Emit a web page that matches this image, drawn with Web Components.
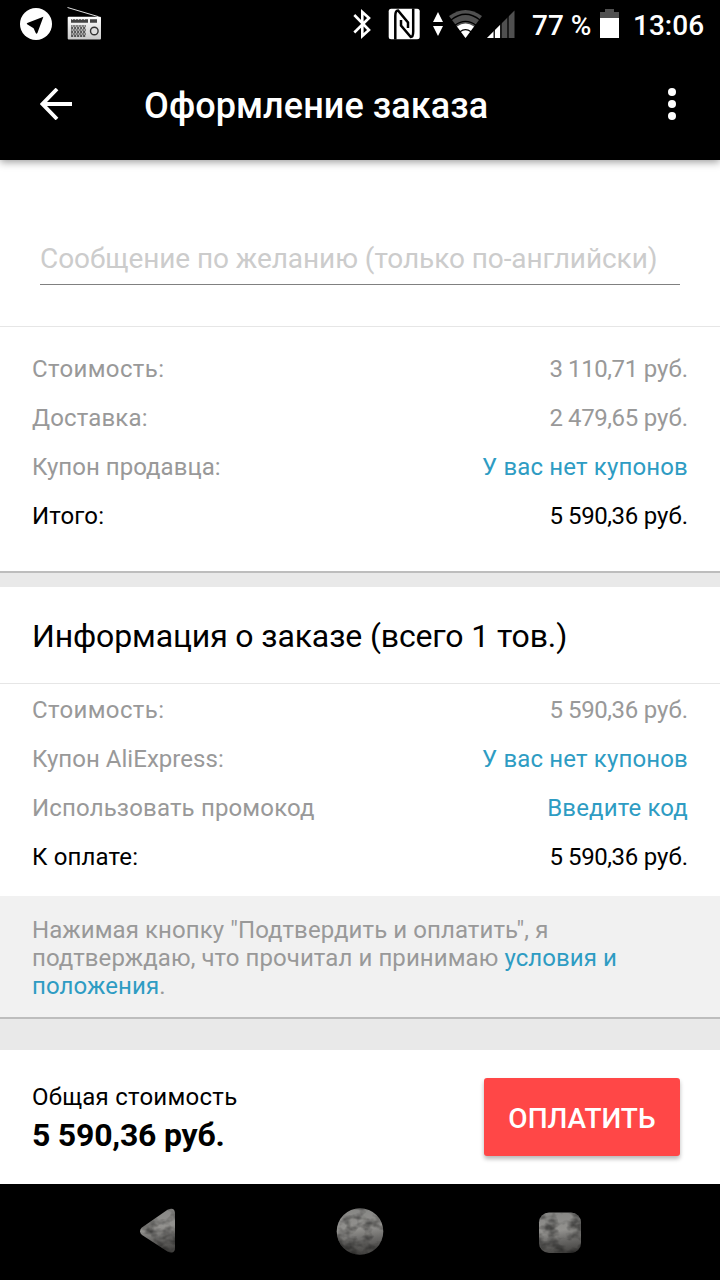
<!DOCTYPE html>
<html lang="ru">
<head>
<meta charset="utf-8">
<title>Оформление заказа</title>
<style>
    body {
        margin: 0;
        font-family: Roboto, "Noto Sans", sans-serif;
        background: #e9e9e9;
        color: #000;
    }
</style>
</head>
<body>
<checkout-screen></checkout-screen>

<script>
class StatusBar extends HTMLElement {
    constructor() {
        super();
        this.attachShadow({ mode: "open" });
    }

    connectedCallback() {
        this.shadowRoot.innerHTML = `
        <style>
            :host {
                display: flex;
                align-items: flex-start;
                justify-content: space-between;
                height: 48px;
                padding: 0 16px 0 20px;
                box-sizing: border-box;
                background: #000;
                color: #fff;
            }

            .side {
                display: flex;
                height: 48px;
            }

            svg {
                display: block;
                height: 48px;
            }

            .text {
                font-size: 28px;
                font-weight: 500;
                line-height: 51px;
                white-space: nowrap;
            }

            .battery {
                margin: 0 14px 0 8px;
            }

            .percent {
                width: 60px;
                margin-left: 16px;
            }

            .time {
                width: 71px;
            }
        </style>

        <div class="side">
            <svg width="84" viewBox="20 0 84 48">
                <circle cx="36" cy="24" r="16" fill="#fff"/>
                <path d="M27.300 22.900 43.400 16.800 37.400 33Q36.500 34.500 35.600 32.800L33.600 28.300 27.500 24.600Q26 23.600 27.300 22.900z" fill="#000"/>
                <defs>
                    <linearGradient id="case" x1="0" y1="0" x2="0" y2="1">
                        <stop offset="0" stop-color="#fff"/>
                        <stop offset="1" stop-color="#c8c8c8"/>
                    </linearGradient>
                    <pattern id="grille" width="3" height="4" patternUnits="userSpaceOnUse">
                        <path d="M0 0 1.5 2 0 4M2 0 3.2 2 2 4" fill="none" stroke="#333" stroke-width=".9"/>
                    </pattern>
                </defs>
                <path d="M67.5 7.5 98.5 16.7" stroke="#ddd" stroke-width="1"/>
                <rect x="67.7" y="16.7" width="33.3" height="22.8" rx="1" fill="url(#case)"/>
                <path d="M71 21h17M90 21h7" stroke="#444" stroke-width="3.5"/>
                <path d="M72 19.5h15" stroke="#ccc" stroke-width="1" stroke-dasharray="1 2"/>
                <rect x="71" y="25" width="15" height="12" fill="url(#grille)"/>
                <circle cx="94.3" cy="31" r="3.8" fill="#ddd" stroke="#333" stroke-width="1.4"/>
            </svg>
        </div>
        <div class="side">
            <svg width="164" viewBox="352 0 164 48">
                <path d="M354.300 15 369 30 362.300 36V12L369 18 354.300 32.500" fill="none" stroke="#fff" stroke-width="2.600"/>
                <rect x="388.7" y="8.7" width="31" height="30.6" rx="2.5" fill="#fff"/>
                <path d="M395.300 39.500V16Q395.300 10.500 398 10.500L408 22.500V28" fill="none" stroke="#000" stroke-width="2.500"/>
                <path d="M413.200 8.500V31.500Q413.200 37 410.800 37L401 25.500V20" fill="none" stroke="#000" stroke-width="2.500"/>
                <path d="M438 12 443 22H433zM438 36 443 26H433z" fill="#fff"/>
                <path d="M449 16Q465.500 4 482 16L465.500 38z" fill="#505050"/>
                <path d="M457 26.500Q465.500 20.500 474 26.500L465.500 38z" fill="#fff"/>
                <path d="M451 20Q465.500 8.500 480 20M455 25.300Q465.500 17.500 476 25.300M460 31.700Q465.500 27.500 471 31.700" fill="none" stroke="#000" stroke-width="1.300"/>
                <path d="M487 38 514.500 10.500V38z" fill="#505050"/>
                <path d="M487 38 500 25V38z" fill="#fff"/>
                <path d="M494.200 20V38M501 15V38M508 10V38" stroke="#000" stroke-width="1.300"/>
            </svg>
            <span class="text percent">77 %</span>
            <svg class="battery" width="19" viewBox="600 0 19 48">
                <path d="M600 12h5V9h9v3h5v6h-19z" fill="#505050"/>
                <path d="M600 18h19v20h-19z" fill="#fff"/>
            </svg>
            <span class="text time">13:06</span>
        </div>
        `;
    }
}

class AppHeader extends HTMLElement {
    constructor() {
        super();
        this.attachShadow({ mode: "open" });
    }

    connectedCallback() {
        this.shadowRoot.innerHTML = `
        <style>
            :host {
                display: flex;
                align-items: center;
                height: 112px;
                padding: 0 40px;
                box-sizing: border-box;
                background: #000;
                color: #fff;
                position: relative;
                box-shadow: 0 2px 8px rgba(0, 0, 0, 0.4);
            }

            h1 {
                flex: 1;
                margin: 4px 0 0 72px;
                font-size: 36px;
                font-weight: 500;
                letter-spacing: 0.08px;
                line-height: 48px;
            }

            svg {
                display: block;
            }
        </style>

        <svg width="32" height="32" viewBox="0 0 32 32"><path d="M17 1 2.500 16 17 31M2.500 16H32" fill="none" stroke="#fff" stroke-width="3.800"/></svg>
        <h1><slot></slot></h1>
        <svg width="16" height="32" viewBox="0 0 16 32"><g fill="#fff"><circle cx="8" cy="4" r="4"/><circle cx="8" cy="16" r="4"/><circle cx="8" cy="28" r="4"/></g></svg>
        `;
    }
}

class MessageField extends HTMLElement {
    constructor() {
        super();
        this.attachShadow({ mode: "open" });
    }

    connectedCallback() {
        this.shadowRoot.innerHTML = `
        <style>
            :host {
                display: block;
                height: 166px;
                padding: 80px 40px 0;
                box-sizing: border-box;
                background: #fff;
            }

            .field {
                height: 45px;
                box-sizing: border-box;
                border-bottom: 1px solid #808080;
                color: #ccc;
                font-size: 28px;
                letter-spacing: -0.07px;
                line-height: 37px;
                white-space: nowrap;
            }
        </style>

        <div class="field"><slot></slot></div>
        `;
    }
}

class PriceRow extends HTMLElement {
    constructor() {
        super();
        this.attachShadow({ mode: "open" });
    }

    connectedCallback() {
        this.shadowRoot.innerHTML = `
        <style>
            :host {
                display: flex;
                justify-content: space-between;
                padding: 0 32px;
                color: #999;
                font-size: 24px;
                line-height: 49px;
                white-space: nowrap;
            }

            :host([total]) {
                color: #000;
            }

            .label {
                letter-spacing: var(--label-spacing, 0.15px);
            }

            :host([link]) .value {
                color: #2e9cc3;
                letter-spacing: 0.15px;
            }
        </style>

        <span class="label">${this.getAttribute("label")}</span>
        <span class="value"><slot></slot></span>
        `;
    }
}

class PayBar extends HTMLElement {
    constructor() {
        super();
        this.attachShadow({ mode: "open" });
    }

    connectedCallback() {
        this.shadowRoot.innerHTML = `
        <style>
            :host {
                display: flex;
                justify-content: space-between;
                align-items: center;
                height: 134px;
                padding: 0 40px 0 32px;
                box-sizing: border-box;
                background: #fff;
            }

            .info {
                padding-top: 4px;
            }

            .label {
                font-size: 24px;
                letter-spacing: 0.27px;
                line-height: 32px;
            }

            .sum {
                font-size: 32px;
                font-weight: 700;
                letter-spacing: -0.22px;
                line-height: 44px;
            }

            button {
                width: 196px;
                height: 78px;
                padding: 2px 0 0;
                border: 0;
                border-radius: 3px;
                background: #ff4747;
                box-shadow: 0 3px 4px rgba(0, 0, 0, 0.28);
                color: #fff;
                font: 500 28px Roboto, sans-serif;
            }
        </style>

        <div class="info">
            <div class="label">Общая стоимость</div>
            <div class="sum"><slot></slot></div>
        </div>
        <button>ОПЛАТИТЬ</button>
        `;
    }
}

class NavBar extends HTMLElement {
    constructor() {
        super();
        this.attachShadow({ mode: "open" });
    }

    connectedCallback() {
        this.shadowRoot.innerHTML = `
        <style>
            :host {
                display: block;
                height: 96px;
                background: #000;
            }

            svg {
                display: block;
            }
        </style>

        <svg width="720" height="96" viewBox="0 1184 720 96">
            <defs>
                <linearGradient id="stone" x1="0" y1="0" x2=".15" y2="1">
                    <stop offset="0" stop-color="#858583"/>
                    <stop offset=".5" stop-color="#93928f"/>
                    <stop offset=".75" stop-color="#6a6967"/>
                    <stop offset="1" stop-color="#4c4b49"/>
                </linearGradient>
                <filter id="rough" x="0" y="0" width="1" height="1" color-interpolation-filters="sRGB">
                    <feTurbulence type="fractalNoise" baseFrequency=".07 .1" numOctaves="3" seed="4"/>
                    <feColorMatrix values="0 0 0 0 0  0 0 0 0 0  0 0 0 0 0  1.200 0 0 0 -.48" result="noise"/>
                    <feComposite in="noise" in2="SourceAlpha" operator="in" result="shade"/>
                    <feMerge><feMergeNode in="SourceGraphic"/><feMergeNode in="shade"/></feMerge>
                </filter>
            </defs>
            <g fill="url(#stone)" filter="url(#rough)">
                <path d="M142 1227.500 167.500 1209.800Q175 1206.500 175 1214V1247.500Q175 1255 167.500 1251.500L142 1235Q138 1231 142 1227.500z"/>
                <circle cx="360" cy="1231.500" r="23.300"/>
                <rect x="539" y="1212.500" width="42" height="40.500" rx="10"/>
            </g>
        </svg>
        `;
    }
}

class CheckoutScreen extends HTMLElement {
    constructor() {
        super();
        this.attachShadow({ mode: "open" });
    }

    connectedCallback() {
        this.shadowRoot.innerHTML = `
        <style>
            :host {
                display: block;
                width: 720px;
                height: 1280px;
                overflow: hidden;
            }

            section {
                box-sizing: border-box;
                background: #fff;
            }

            .seller {
                height: 247px;
                padding-top: 18px;
                border-top: 1px solid #e6e6e6;
                border-bottom: 2px solid #bdbdbd;
            }

            .order {
                height: 309px;
                margin-top: 14px;
            }

            .cost {
                --label-spacing: 0.37px;
            }

            .coupon {
                --label-spacing: 0.03px;
            }

            .num {
                letter-spacing: -0.42px;
            }

            h2 {
                height: 97px;
                margin: 0 0 2px;
                padding-left: 32px;
                box-sizing: border-box;
                border-bottom: 1px solid #e6e6e6;
                font-size: 32px;
                font-weight: 400;
                letter-spacing: -0.13px;
                line-height: 98px;
            }

            .terms {
                height: 123px;
                margin: 0 0 31px;
                padding: 20px 60px 0 32px;
                box-sizing: border-box;
                border-bottom: 2px solid #bdbdbd;
                background: #f1f1f1;
                color: #999;
                font-size: 24px;
                letter-spacing: 0.08px;
                line-height: 28px;
            }

            .terms a {
                color: #2e9cc3;
            }
        </style>

        <status-bar></status-bar>
        <app-header>Оформление заказа</app-header>
        <message-field>Сообщение по желанию (только по-английски)</message-field>
        <section class="seller">
            <price-row class="cost" label="Стоимость:"><span class="num">3 110,71</span> руб.</price-row>
            <price-row label="Доставка:"><span class="num">2 479,65</span> руб.</price-row>
            <price-row class="coupon" label="Купон продавца:" link>У вас нет купонов</price-row>
            <price-row label="Итого:" total><span class="num">5 590,36</span> руб.</price-row>
        </section>
        <section class="order">
            <h2>Информация о заказе (всего 1 тов.)</h2>
            <price-row class="cost" label="Стоимость:"><span class="num">5 590,36</span> руб.</price-row>
            <price-row class="coupon" label="Купон AliExpress:" link>У вас нет купонов</price-row>
            <price-row label="Использовать промокод" link>Введите код</price-row>
            <price-row label="К оплате:" total><span class="num">5 590,36</span> руб.</price-row>
        </section>
        <p class="terms">Нажимая кнопку "Подтвердить и оплатить", я<br>подтверждаю, что прочитал и принимаю <a>условия и<br>положения</a>.</p>
        <pay-bar>5 590,36 руб.</pay-bar>
        <nav-bar></nav-bar>
        `;
    }
}

customElements.define("status-bar", StatusBar);
customElements.define("app-header", AppHeader);
customElements.define("message-field", MessageField);
customElements.define("price-row", PriceRow);
customElements.define("pay-bar", PayBar);
customElements.define("nav-bar", NavBar);
customElements.define("checkout-screen", CheckoutScreen);
</script>
</body>
</html>
